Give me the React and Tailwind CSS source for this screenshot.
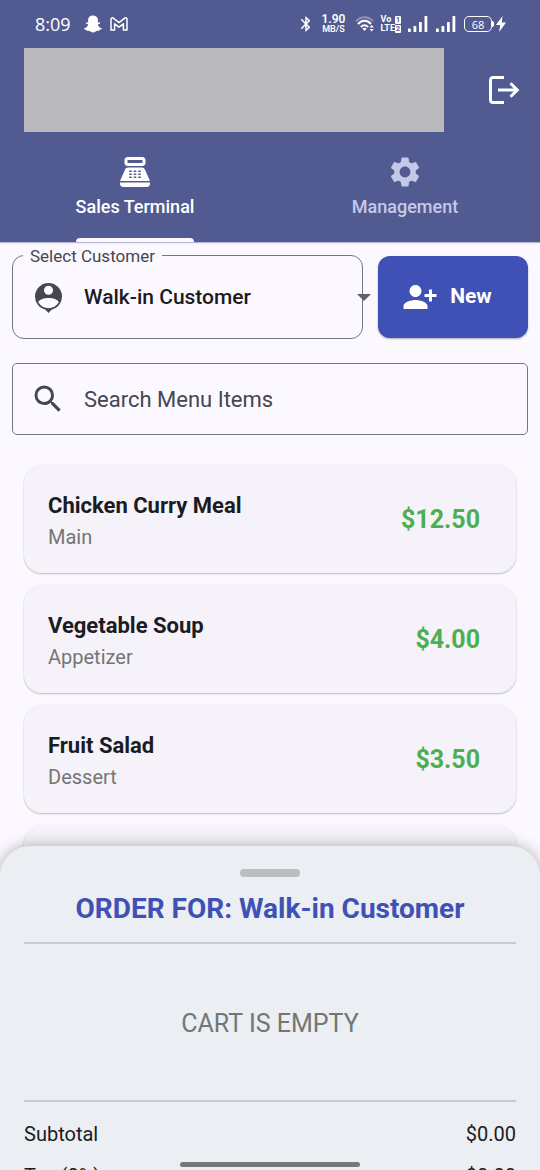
import { MdBluetooth, MdPersonAddAlt1, MdPointOfSale, MdSearch, MdSettings } from "react-icons/md";
import { FaSnapchatGhost } from "react-icons/fa";

const menuItems = [
  { name: "Chicken Curry Meal", category: "Main", price: "$12.50" },
  { name: "Vegetable Soup", category: "Appetizer", price: "$4.00" },
  { name: "Fruit Salad", category: "Dessert", price: "$3.50" },
];

function MailIcon() {
  return (
    <svg viewBox="0 0 18 14" className="h-3.5 w-[18px]" fill="none" stroke="currentColor" strokeWidth="1.5" strokeLinejoin="round">
      <path d="M1 2.200V13h3.600V6.800L9 10.200l4.400-3.400V13H17V2.200C17 .8 15.400.5 14.400 1.300L9 5.600 3.600 1.300C2.600.5 1 .8 1 2.200z" />
    </svg>
  );
}

function WifiIcon() {
  return (
    <svg viewBox="0 0 20 16" className="h-4 w-5" fill="none" stroke="currentColor" strokeWidth="2">
      <path d="M1 5.200C6-.2 13-.2 18 5.200" opacity=".35" />
      <path d="M3 8C7 3.800 12 3.800 16 8" />
      <path d="M5.800 11C8 9 11 9 13.200 11" />
      <path d="M7.300 12.600Q9.500 11 11.700 12.600L9.500 15z" fill="currentColor" stroke="none" />
      <path d="M14.500 11.500 16.700 9l2.200 2.500zM14.500 13l2.200 2.500 2.200-2.500z" fill="currentColor" stroke="none" />
    </svg>
  );
}

function SignalIcon() {
  return (
    <svg viewBox="0 0 20 16" className="h-4 w-5" fill="currentColor">
      <rect x="0" y="12.500" width="2.800" height="3.500" rx=".6" />
      <rect x="5.500" y="10" width="2.800" height="6" rx=".6" />
      <rect x="11" y="6" width="2.800" height="10" rx=".6" />
      <rect x="16.500" y="0" width="2.800" height="16" rx=".6" />
    </svg>
  );
}

function LogoutIcon() {
  return (
    <svg viewBox="0 0 32 30" className="h-[30px] w-8" fill="none" stroke="currentColor" strokeWidth="3">
      <path d="M16 2.500H5A2.500 2.500 0 0 0 2.500 5v20A2.500 2.500 0 0 0 5 27.500h11M10 15h19M22.500 8.300 29.300 15l-6.800 6.700" />
    </svg>
  );
}

function PersonPinIcon() {
  return (
    <svg viewBox="0 0 28 30" className="h-[30px] w-7">
      <path d="M13.500 0a13.500 13.500 0 0 0-3 26.660L13.500 30l3-3.340A13.500 13.500 0 0 0 13.500 0z" fill="currentColor" />
      <circle cx="13.500" cy="7.300" r="4.500" fill="#fbf8ff" />
      <path d="M3.200 19.300C5.500 13.700 21.500 13.700 23.800 19.300 21.500 23.200 17.500 25.200 13.500 25.200S5.500 23.200 3.200 19.300z" fill="#fbf8ff" />
    </svg>
  );
}

function StatusBar() {
  return (
    <div className="flex h-12 items-center justify-between pl-[35px] pr-[34px] font-['Open_Sans','Noto_Sans',sans-serif]">
      <div className="flex items-center">
        <span className="text-lg">8:09</span>
        <FaSnapchatGhost className="ml-[13px] size-[18px]" />
        <span className="ml-2"><MailIcon /></span>
      </div>
      <div className="flex items-center">
        <MdBluetooth className="size-[18px]" />
        <span className="ml-1.5 flex flex-col items-center font-['Roboto',sans-serif] font-semibold">
          <span className="text-xs leading-[11px]">1.90</span>
          <span className="text-[9px] leading-[9px]">MB/S</span>
        </span>
        <span className="ml-2.5"><WifiIcon /></span>
        <span className="ml-[5px] flex flex-col font-['Roboto',sans-serif] text-[9px] font-bold leading-[9px]">
          <span className="flex items-center justify-between">
            Vo
            <span className="rounded-[1px] bg-white px-px text-[7px] leading-[8px] text-[#525b91]">1</span>
          </span>
          <span className="flex items-center justify-between">
            LTE
            <span className="rounded-[1px] bg-white px-px text-[7px] leading-[8px] text-[#525b91]">2</span>
          </span>
        </span>
        <span className="ml-[7px]"><SignalIcon /></span>
        <span className="ml-2"><SignalIcon /></span>
        <span className="ml-2 flex h-4 w-7 items-center justify-center rounded-[5px] border border-white text-[11px] leading-none">68</span>
        <span className="h-1.5 w-0.5 rounded-r bg-white" />
        <svg viewBox="0 0 10 16" className="ml-0.5 h-4 w-2.5" fill="currentColor">
          <path d="M6.500 0 0 9h4.200L3.200 16 10 6.500H5.800z" />
        </svg>
      </div>
    </div>
  );
}

function Header() {
  return (
    <header className="bg-[#525b91] text-white shadow-[0_1px_1px_#b9b9d3]">
      <StatusBar />
      <div className="flex items-center gap-11 pl-6 pr-5">
        <div className="h-[84px] flex-1 bg-[#bab9be]" />
        <button type="button" aria-label="Log out"><LogoutIcon /></button>
      </div>
      <nav className="grid grid-cols-2 text-lg font-medium leading-6">
        <a href="#sales" aria-current="page" className="flex flex-col items-center">
          <MdPointOfSale className="mt-[22px] size-9" />
          <span className="mt-[5px] flex flex-col">
            Sales Terminal
            <span className="mt-[19px] h-1 rounded-t-[4px] bg-[#fbf8ff]" />
          </span>
        </a>
        <a href="#management" className="flex flex-col items-center text-[#c5c9e8]">
          <MdSettings className="mt-[22px] size-9" />
          <span className="mt-[5px]">Management</span>
        </a>
      </nav>
    </header>
  );
}

function CustomerRow() {
  return (
    <div className="flex items-end gap-[15px]">
      <div className="relative min-w-0 flex-1">
        <fieldset className="min-w-0 rounded-xl border border-[#77767f] pl-2.5 text-[#46464f]">
          <legend className="px-[7px] pt-0.5 text-[17px] leading-4">
            <label htmlFor="customer">Select Customer</label>
          </legend>
          <div className="flex h-[74px] items-center pb-1.5 pl-3">
            <PersonPinIcon />
            <select id="customer" className="ml-[21px] min-w-0 flex-1 appearance-none bg-transparent text-[21px] font-medium text-[#1b1b21] outline-none">
              <option>Walk-in Customer</option>
            </select>
          </div>
        </fieldset>
        <svg viewBox="0 0 14 7" className="pointer-events-none absolute -right-2 top-12 h-[7px] w-3.5" fill="#606066">
          <path d="M0 0h14L7 7z" />
        </svg>
      </div>
      <button type="button" className="mb-px flex h-[82px] w-[150px] items-center justify-center gap-3 rounded-xl bg-[#3f51b5] pr-3 text-[21px] font-bold text-white shadow-[0_1px_2px_rgba(0,0,0,0.3)]">
        <MdPersonAddAlt1 className="size-9" />
        New
      </button>
    </div>
  );
}

function SearchBox() {
  return (
    <label className="mt-6 flex h-[72px] items-center rounded-[5px] border border-[#77767f] pl-[17px] text-[#46464f]">
      <MdSearch className="size-9" aria-hidden="true" />
      <input type="search" aria-label="Search Menu Items" placeholder="Search Menu Items" className="ml-[18px] min-w-0 flex-1 bg-transparent text-[22px] outline-none placeholder:text-[#46464f]" />
    </label>
  );
}

const cardClass = "flex h-[108px] items-center justify-between rounded-[18px] bg-[#f5f2f9] pl-6 pr-9 pt-0.5 shadow-[0_1px_2px_rgba(0,0,0,0.25)]";

function MenuList() {
  return (
    <ul className="mt-[30px] flex flex-col gap-3 px-3">
      {menuItems.map((item) => (
        <li key={item.name} className={cardClass}>
          <div className="pt-0.5">
            <h2 className="text-[22px] font-bold leading-8 text-[#1b1b21]">{item.name}</h2>
            <p className="text-xl leading-[30px] text-[#757575]">{item.category}</p>
          </div>
          <span className="text-[25px] font-bold text-[#4caf50]">{item.price}</span>
        </li>
      ))}
      <li className={cardClass} />
    </ul>
  );
}

function OrderSheet() {
  return (
    <section className="absolute inset-x-0 bottom-0 h-[324px] overflow-hidden rounded-t-[30px] bg-[#ebeef2] px-6 text-[#1b1b21] shadow-[0_0_15px_rgba(0,0,0,0.3)]">
      <div className="mx-auto mt-[23px] h-2 w-[60px] rounded-full bg-[#bdbdbd]" />
      <h2 className="mt-[13px] text-center text-[28px] font-bold leading-[38px] text-[#3f51b5]">ORDER FOR: Walk-in Customer</h2>
      <div className="mt-3.5 border-t-2 border-[#c8cacf]" />
      <p className="flex h-[156px] items-center justify-center pt-1 text-[25px] text-[#757575]">CART IS EMPTY</p>
      <dl className="flex flex-col gap-0.5 border-t-2 border-[#c8cacf] pt-3 text-xl leading-10">
        <div className="flex justify-between">
          <dt>Subtotal</dt>
          <dd>$0.00</dd>
        </div>
        <div className="flex justify-between">
          <dt>Tax (0%)</dt>
          <dd>$0.00</dd>
        </div>
      </dl>
      <div className="absolute bottom-[3px] left-1/2 h-[5px] w-1/3 -translate-x-1/2 rounded-full bg-[#77787b]" />
    </section>
  );
}

export default function App() {
  return (
    <div className="relative h-dvh overflow-hidden bg-[#fbf8ff] font-['Roboto',sans-serif]">
      <Header />
      <main className="px-3 pt-1">
        <CustomerRow />
        <SearchBox />
        <MenuList />
      </main>
      <OrderSheet />
    </div>
  );
}
